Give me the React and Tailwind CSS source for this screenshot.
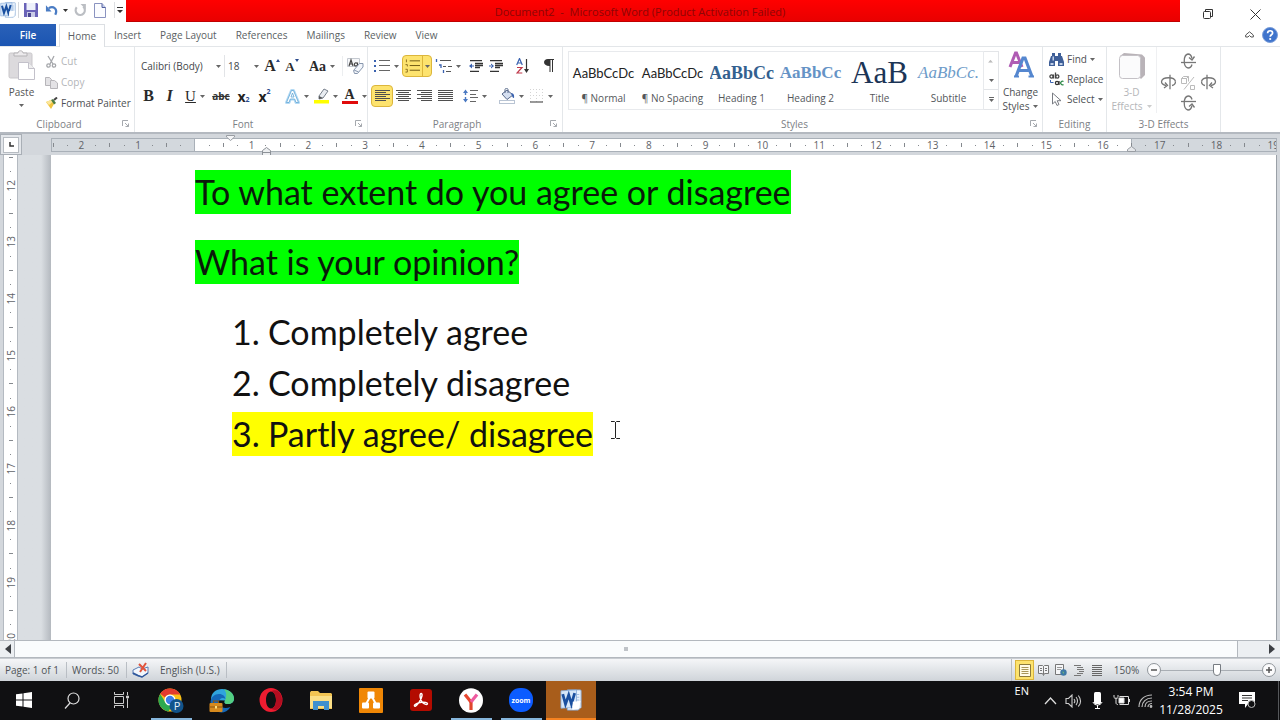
import React from "react";

const cx = (...parts) => parts.filter(Boolean).join(" ");

function Caret({ className = "text-[#666]" }) {
  return (
    <svg width="5" height="3" viewBox="0 0 5 3" className={cx("shrink-0", className)} aria-hidden="true">
      <path d="M0 0h5L2.500 3z" fill="currentColor" />
    </svg>
  );
}

function Tool({ label, className = "w-[21px]", caret, children }) {
  return (
    <button
      type="button"
      aria-label={label}
      className={cx("flex h-[22px] shrink-0 items-center justify-center gap-1", className)}
    >
      {children}
      {caret && <Caret />}
    </button>
  );
}

function Group({ name, launcher, className, children }) {
  return (
    <section className={cx("flex flex-col border-r border-[#e4e7ea]", className)}>
      <div className="flex-1">{children}</div>
      <div className="flex h-4 items-center text-[#7c8085]">
        <span className="flex-1 text-center">{name}</span>
        {launcher && (
          <button type="button" aria-label={name + " options"} className="flex w-4 justify-center">
            <svg width="8" height="8" viewBox="0 0 8 8" fill="none" stroke="#a5a9ae">
              <path d="M.5 6V.5H6M3 3l3.500 3.500M6.500 3.500v3h-3" />
            </svg>
          </button>
        )}
      </div>
    </section>
  );
}

/* ---------- title bar ---------- */

function WordLogo({ size = 16 }) {
  return (
    <svg width={size} height={size} viewBox="0 0 24 24" aria-hidden="true">
      <path d="M8 1h14a1 1 0 0 1 1 1v18l-3 3H8z" fill="#e9f1fb" stroke="#8fb0d8" />
      <path d="M18 6h3M18 9h3M18 12h3" stroke="#9dbbe0" />
      <path d="M1 2l17-1v19L1 21z" fill="#d6e6f8" stroke="#7ea5d6" strokeWidth=".8" />
      <path d="M3 5.500l3 11 3.500-10 3 10 3.500-12" fill="none" stroke="#1a4f9f" strokeWidth="3" />
      <path d="M14 14l8.500-1-2 8.500-7 1z" fill="#fff" />
    </svg>
  );
}

function TitleBar() {
  return (
    <header className="flex h-6 shrink-0 items-start">
      <div className="flex h-5 w-[126px] shrink-0 items-center">
        <span className="flex w-[17px]"><WordLogo /></span>
        <span className="ml-px h-4 w-px bg-[#d5d8dc]" />
        <button type="button" aria-label="Save" className="ml-1">
          <svg width="16" height="16" viewBox="0 0 16 16">
            <path d="M1 1h13l1 1v13H1z" fill="#6a63b8" />
            <path d="M3.500 1h9v7h-9z" fill="#eef1fb" />
            <path d="M4 10h8v5H4z" fill="#c9cbe6" />
            <path d="M5 11h3v4H5z" fill="#4a4691" />
          </svg>
        </button>
        <button type="button" aria-label="Undo" className="ml-1.5 flex items-center gap-1">
          <svg width="14" height="14" viewBox="0 0 15 14">
            <path d="M4 5c5-3 10 1 7 7" fill="none" stroke="#4a7cc4" strokeWidth="2.400" />
            <path d="M1 2v6.500h6z" fill="#4a7cc4" />
          </svg>
          <Caret className="text-[#333]" />
        </button>
        <button type="button" aria-label="Repeat" className="ml-1.5">
          <svg width="13" height="14" viewBox="0 0 12 13">
            <path d="M2.500 4a4.300 4.300 0 1 0 6-.5" fill="none" stroke="#bbbec3" strokeWidth="2" />
            <path d="M6 1h5v5z" fill="#bbbec3" />
          </svg>
        </button>
        <button type="button" aria-label="New document" className="ml-[7px]">
          <svg width="12" height="15" viewBox="0 0 12 15">
            <path d="M.5.5h7.500l3.500 4v10H.5z" fill="#fbfcff" stroke="#8a93c0" />
            <path d="M8 .5v4h3.500" fill="#c8d2ee" stroke="#53609f" />
          </svg>
        </button>
        <span className="ml-2 h-4 w-px bg-[#dddfe2]" />
        <button type="button" aria-label="Customize toolbar" className="ml-[2px]">
          <svg width="6" height="6" viewBox="0 0 6 6">
            <path d="M0 0h6v1H0zM0 3h6L3 6z" fill="#333" />
          </svg>
        </button>
      </div>
      <h1 className="h-[22px] flex-1 border-b border-[#c00000] bg-gradient-to-b from-[#ff0000] to-[#e90000] pr-[26px] text-center text-[11px] leading-6 text-[#8c0606]">
        <span>Document2&nbsp; -&nbsp; Microsoft Word (Product Activation Failed)</span>
      </h1>
      <div className="flex h-6 w-[100px] shrink-0 items-center justify-between pt-1 pr-[19px] pl-[22px]">
        <button type="button" aria-label="Restore">
          <svg width="12" height="12" viewBox="0 0 12 12" fill="none" stroke="#333">
            <rect x="1.500" y="3.500" width="7" height="7" rx="1" />
            <path d="M3.500 3.500v-2h7v7h-2" />
          </svg>
        </button>
        <button type="button" aria-label="Close">
          <svg width="11" height="11" viewBox="0 0 11 11" stroke="#333">
            <path d="M.5.5l10 10M10.500.5l-10 10" />
          </svg>
        </button>
      </div>
    </header>
  );
}

function TabBar() {
  const tabs = ["Insert", "Page Layout", "References", "Mailings", "Review", "View"];
  return (
    <nav className="flex h-[23px] shrink-0 items-stretch border-b border-[#e3e6e9] text-[#5b5f64]">
      <button type="button" className="w-14 shrink-0 bg-gradient-to-b from-[#2a61b8] to-[#1b55b2] font-semibold text-white">
        File
      </button>
      <button type="button" className="-mb-px ml-[3px] w-[46px] shrink-0 border border-b-0 border-[#dcdfe3] bg-white">
        Home
      </button>
      <div className="flex flex-1 gap-[19px] pl-[9px]">
        {tabs.map((t) => (
          <button key={t} type="button">{t}</button>
        ))}
      </div>
      <div className="flex items-center gap-2 pr-0.5">
        <button type="button" aria-label="Minimize ribbon">
          <svg width="9" height="8" viewBox="0 0 9 8" fill="none" stroke="#555">
            <path d="M.7 6V4L4.500.8 8.300 4v2H6L4.500 4.500 3 6z" />
          </svg>
        </button>
        <button type="button" aria-label="Help">
          <svg width="16" height="16" viewBox="0 0 16 16">
            <circle cx="8" cy="8" r="7.500" fill="#3f74cc" stroke="#7d9fd9" />
            <path d="M5.600 6.200c0-3.200 5-3.200 5-.3 0 1.800-2.400 1.900-2.400 3.800" fill="none" stroke="#fff" strokeWidth="1.700" />
            <circle cx="8.200" cy="12" r="1.100" fill="#fff" />
          </svg>
        </button>
      </div>
    </nav>
  );
}

/* ---------- ribbon groups ---------- */

function Clipboard() {
  const row = "flex h-[21px] items-center gap-[3px] whitespace-nowrap";
  return (
    <Group name="Clipboard" launcher className="w-[135px]">
      <div className="flex">
        <button type="button" className="flex w-[43px] flex-col items-center pt-[3px]">
          <svg width="28" height="31" viewBox="0 0 28 31" aria-hidden="true">
            <rect x="1" y="3" width="23" height="25" rx="1.500" fill="#dcdadd" stroke="#c9c7ca" />
            <path d="M6 6V3h4c0-3 5-3 5 0h4v3z" fill="#eceaec" stroke="#b5b3b6" />
            <path d="M10.500 12.500h10l6 6v11h-16z" fill="#fff" stroke="#c3c1ca" />
            <path d="M20.500 12.500v6h6" fill="#eee" stroke="#c3c1ca" />
          </svg>
          <span className="mt-[3px] leading-4 text-[#555]">Paste</span>
          <span className="pt-1"><Caret /></span>
        </button>
        <div className="flex flex-col pt-1 pl-[2px]">
          <button type="button" className={cx(row, "text-[#b3b5b8]")}>
            <svg width="13" height="13" viewBox="0 0 13 13" fill="none" stroke="#a5a7ab" strokeWidth="1.300" aria-hidden="true">
              <path d="M3 1l5 8M9 1L5 9" />
              <circle cx="3.500" cy="10.500" r="1.700" />
              <circle cx="9" cy="10.500" r="1.700" />
            </svg>
            Cut
          </button>
          <button type="button" className={cx(row, "text-[#b3b5b8]")}>
            <svg width="13" height="13" viewBox="0 0 13 13" fill="#e3e2e5" stroke="#b6b5b9" aria-hidden="true">
              <path d="M.5 1.500h4l2 2v6h-6z" />
              <path d="M5.500 4.500h4l3 2.500v5.500h-7z" />
            </svg>
            Copy
          </button>
          <button type="button" className={cx(row, "text-[#4d5054]")}>
            <svg width="13" height="13" viewBox="0 0 13 13" aria-hidden="true">
              <path d="M1 5l5-2 3 4-3 5z" fill="#f0c33c" />
              <path d="M1 5l5-2 1.500 2L4 8z" fill="#fbe69a" />
              <path d="M6 3l2-1 3 4-2 1.500z" fill="#4a7a3f" />
              <path d="M9 3l3-2.500" stroke="#444" strokeWidth="2" />
            </svg>
            Format Painter
          </button>
        </div>
      </div>
    </Group>
  );
}

function DropDown({ label, value, options, className }) {
  return (
    <span className={cx("flex h-[22px] shrink-0 items-center pr-[3px]", className)}>
      <select aria-label={label} defaultValue={value} className="h-[22px] min-w-0 flex-1 appearance-none bg-transparent leading-[22px] text-[#44474b] outline-none">
        {options.map((o) => <option key={o}>{o}</option>)}
      </select>
      <Caret />
    </span>
  );
}

const serif = "font-['Liberation_Serif',serif] text-[#2a2a2a]";

function FontGroup() {
  return (
    <Group name="Font" launcher className="w-[233px]">
      <div className="flex flex-col gap-2 pt-2 pl-[3px]">
        <div className="flex items-center">
          <DropDown label="Font" value="Calibri (Body)" options={["Calibri (Body)", "Cambria"]} className="w-[87px] border-r border-[#e2e4e7] pl-[3px]" />
          <DropDown label="Font size" value="18" options={["16", "18", "20"]} className="w-[37px] pl-[3px]" />
          <Tool label="Grow font" className="w-5">
            <span className={cx("flex items-center leading-5 font-bold text-[16px]", serif)}>
              A
              <svg width="4" height="3" viewBox="0 0 4 3" className="mb-3"><path d="M0 3l2-3 2 3z" fill="#2b4a8c" /></svg>
            </span>
          </Tool>
          <Tool label="Shrink font" className="w-5">
            <span className={cx("flex items-center pt-px leading-5 font-bold text-[13px]", serif)}>
              A
              <svg width="4" height="3" viewBox="0 0 4 3" className="mb-3"><path d="M0 0h4L2 3z" fill="#2b4a8c" /></svg>
            </span>
          </Tool>
          <Tool label="Change case" caret className="ml-1 w-8">
            <span className={cx("text-[14px] font-bold", serif)}>Aa</span>
          </Tool>
          <span className="ml-1 h-5 w-px bg-[#eceef0]" />
          <Tool label="Clear formatting" className="w-6">
            <svg width="17" height="16" viewBox="0 0 17 16" fill="none">
              <path d="M.5.500h12v8H.5z" fill="#f6f7f9" stroke="#c4c9d0" />
              <path d="M2 8l2-6 2 6M2.800 6h2.400M10.500 4.500v3.500M10.500 6.200a1.600 1.600 0 1 0-.2 1" stroke="#444" strokeWidth="1.200" />
              <path d="M6.500 12.500l6-7h3.500v3.500l-5.500 6.500H7.500z" fill="#f3f6fb" stroke="#8796ad" />
              <path d="M7 12l4.500 2" stroke="#8796ad" />
            </svg>
          </Tool>
        </div>
        <div className="flex items-center">
          <Tool label="Bold"><b className={cx("text-[16px]", serif)}>B</b></Tool>
          <Tool label="Italic"><i className={cx("text-[16px] font-bold", serif)}>I</i></Tool>
          <Tool label="Underline" caret className="ml-px w-7"><span className={cx("text-[15px] underline", serif)}>U</span></Tool>
          <Tool label="Strikethrough" className="w-6"><s className="font-bold text-[#333]">abc</s></Tool>
          <Tool label="Subscript">
            <span className="flex items-center text-[14px] font-bold text-[#222]">x<span className="pt-2 text-[7px] text-[#2b4a8c]">2</span></span>
          </Tool>
          <Tool label="Superscript">
            <span className="flex items-center text-[14px] font-bold text-[#222]">x<span className="pb-2 text-[7px] text-[#2b4a8c]">2</span></span>
          </Tool>
          <Tool label="Text effects" caret className="ml-1.5 w-[31px]">
            <svg width="15" height="15" viewBox="0 0 15 15" strokeLinejoin="round">
              <path d="M1.500 13.500l5-12h2l5 12h-2.500l-1.300-3.500H5.300L4 13.500z" fill="#fff" stroke="#b4daf4" strokeWidth="3" />
              <path d="M1.500 13.500l5-12h2l5 12h-2.500l-1.300-3.500H5.300L4 13.500zM6 8h3L7.500 4z" fill="#fff" stroke="#5ea4d6" strokeWidth=".8" />
            </svg>
          </Tool>
          <Tool label="Highlight color" caret className="w-[27px]">
            <svg width="15" height="16" viewBox="0 0 15 16"><path d="M5 8l5-7 4 2-5 7-4 1z" fill="#e9edf2" stroke="#77808c" /><path d="M5 8l4 2-4 1z" fill="#555" /><path d="M0 12h15v3.500H0z" fill="#ffff00" /></svg>
          </Tool>
          <Tool label="Font color" caret className="w-[30px]">
            <span className={cx("flex w-4 justify-center border-b-[3px] border-[#e00b0b] text-[14px] leading-3 font-bold", serif)}>A</span>
          </Tool>
        </div>
      </div>
    </Group>
  );
}

function Lines({ kind }) {
  const x = { left: 0, center: 2, right: 4, full: 0 }[kind];
  const w = kind === "full" ? 15 : 11;
  return (
    <svg width="15" height="12" viewBox="0 0 15 12">
      {[0, 1, 2, 3, 4, 5].map((i) => (
        <rect key={i} x={i % 2 ? x : 0} y={i * 2} width={i % 2 ? w : 15} height="1" fill="#4f4f4f" />
      ))}
    </svg>
  );
}

const lit = "border border-[#dcb63c] bg-[#fde36e]";

function ParagraphGroup() {
  return (
    <Group name="Paragraph" launcher className="w-[195px]">
      <div className="flex flex-col gap-2 pt-2 pl-[3px]">
        <div className="flex items-center">
          <Tool label="Bullets" caret className="w-[31px]">
            <svg width="16" height="14" viewBox="0 0 16 14"><path d="M0 1h2v2H0zM0 6h2v2H0zM0 11h2v2H0z" fill="#3a62b0" /><path d="M5 1.500h11M5 6.500h11M5 11.500h11" stroke="#666" /></svg>
          </Tool>
          <button type="button" aria-label="Numbering" className={cx("flex h-[22px] w-[30px] items-center rounded-sm pl-0.5", lit)}>
            <svg width="15" height="14" viewBox="0 0 16 14"><path d="M1.500 0v3M.5 5.500h2v2M.5 10.500h2v3h-2" fill="none" stroke="#8a6d1c" /><path d="M5 1.500h11M5 6.500h11M5 11.500h11" stroke="#6a5310" /></svg>
            <span className="mx-0.5 h-full w-px bg-[#dcb63c]" />
            <Caret />
          </button>
          <Tool label="Multilevel list" caret className="ml-px w-[29px]">
            <svg width="17" height="15" viewBox="0 0 17 15"><path d="M1.500 0v3M4 6h2v3M8.500 11v3" fill="none" stroke="#3a62b0" strokeWidth="1.300" /><path d="M5 1.500h11M8 7.500h3M13 7.500h4M11 12.500h5" stroke="#555" /></svg>
          </Tool>
          <Tool label="Decrease indent" className="ml-1 w-5">
            <svg width="14" height="12" viewBox="0 0 14 12"><path d="M1 .5h12M6 3.500h8M6 5.500h8M6 7.500h5M1 11.500h9" stroke="#333" strokeWidth="1.300" /><path d="M0 6l3-2.500v5zM2 5.500h3v1H2z" fill="#3a62b0" /></svg>
          </Tool>
          <Tool label="Increase indent" className="w-5">
            <svg width="14" height="12" viewBox="0 0 14 12"><path d="M1 .5h12M6 3.500h8M6 5.500h8M6 7.500h5M1 11.500h9" stroke="#333" strokeWidth="1.300" /><path d="M5 6L2 3.500v5zM0 5.500h3v1H0z" fill="#3a62b0" /></svg>
          </Tool>
          <Tool label="Sort" className="ml-1.5 w-[22px]">
            <svg width="14" height="16" viewBox="0 0 14 16" fill="none"><path d="M.7 7l2.800-6.500L6.300 7M1.700 5h3.600" stroke="#3a62b0" strokeWidth="1.200" /><path d="M1 9.500h5L1 15h5.300" stroke="#c0394b" strokeWidth="1.200" /><path d="M10.500 1v12" stroke="#333" strokeWidth="1.200" /><path d="M8 11h5l-2.500 4z" fill="#333" /></svg>
          </Tool>
          <Tool label="Show formatting marks" className="ml-1 w-[22px]">
            <svg width="10" height="14" viewBox="0 0 10 14"><path d="M4 0h6v1H9v12H8V1H6.500v12h-1V7C-1.500 7-1.500 0 4 0z" fill="#333" /></svg>
          </Tool>
        </div>
        <div className="flex items-center">
          <Tool label="Align left" className={cx("w-[22px] rounded-sm", lit)}><Lines kind="left" /></Tool>
          <Tool label="Center"><Lines kind="center" /></Tool>
          <Tool label="Align right"><Lines kind="right" /></Tool>
          <Tool label="Justify"><Lines kind="full" /></Tool>
          <Tool label="Line spacing" caret className="ml-1 w-[30px]">
            <svg width="15" height="14" viewBox="0 0 15 14"><path d="M0 4l2.500-3.500L5 4H3.200v2H1.800V4zM0 10l2.500 3.500L5 10H3.200V8H1.800v2z" fill="#4a79c2" /><path d="M7 1.500h8M7 5.500h6M7 8.500h8M7 12.500h6" stroke="#666" /></svg>
          </Tool>
          <Tool label="Shading" caret className="ml-1.5 w-[31px]">
            <svg width="16" height="16" viewBox="0 0 16 16"><path d="M3 6l5-4 6 5-6 4.500z" fill="#d5dff0" stroke="#58698a" /><path d="M6 5V1.500c0-1.500 3-1.500 3 0V5" fill="none" stroke="#58698a" /><path d="M12 5c3 0 3.500 3 3 5-1.500 0-2-2-3-5z" fill="#3a62b0" /><rect x=".5" y="12.500" width="15" height="3" fill="#fff" stroke="#b9c4d3" /></svg>
          </Tool>
          <Tool label="Borders" caret className="w-7">
            <svg width="14" height="14" viewBox="0 0 14 14" fill="none"><path d="M.5 0v13M6.500 0v13M12.500 0v13M0 .5h13M0 6.500h13" stroke="#d4d4d4" strokeDasharray="1 2" /><path d="M0 13h13" stroke="#555" strokeWidth="1.200" /></svg>
          </Tool>
        </div>
      </div>
    </Group>
  );
}

function StylesGroup() {
  const styles = [
    ["¶ Normal", "AaBbCcDc", "font-['Lato',sans-serif] text-[13px] text-[#222]"],
    ["¶ No Spacing", "AaBbCcDc", "font-['Lato',sans-serif] text-[13px] text-[#222]"],
    ["Heading 1", "AaBbCc", "font-['Liberation_Serif',serif] text-[18px] font-bold text-[#33608f]"],
    ["Heading 2", "AaBbCc", "font-['Liberation_Serif',serif] text-[17px] font-bold text-[#6593c6]"],
    ["Title", "AaB", "font-['Liberation_Serif',serif] text-[31px] text-[#1c3556]"],
    ["Subtitle", "AaBbCc.", "font-['Liberation_Serif',serif] text-[17px] italic text-[#6d9bc9]"],
  ];
  return (
    <Group name="Styles" launcher className="w-[480px]">
      <div className="flex pt-1 pl-[5px]">
        <div className="grid h-[59px] flex-1 grid-cols-6 border border-[#e8eaed]">
          {styles.map(([name, sample, look]) => (
            <button key={name} type="button" className="flex min-w-0 flex-col items-center pt-1">
              <span className={cx("flex h-[34px] w-[64px] items-center justify-center overflow-hidden whitespace-nowrap leading-8", look)}>{sample}</span>
              <span className="leading-4 whitespace-nowrap text-[#54575b]">{name}</span>
            </button>
          ))}
        </div>
        <div className="flex h-[59px] w-[15px] flex-col border border-l-0 border-[#e3e5e8]">
          <button type="button" aria-label="Previous styles" className="flex flex-1 rotate-180 items-center justify-center"><Caret className="text-[#bbb]" /></button>
          <button type="button" aria-label="Next styles" className="flex flex-1 items-center justify-center"><Caret /></button>
          <button type="button" aria-label="More styles" className="flex flex-1 flex-col items-center justify-center gap-px border-t border-[#e3e5e8]">
            <span className="h-px w-[5px] bg-[#666]" />
            <Caret />
          </button>
        </div>
        <button type="button" className="flex w-[43px] flex-col items-center text-[#4d5054]">
          <svg width="26" height="28" viewBox="0 0 26 28" fill="none" aria-hidden="true">
            <path d="M2 16L7.500 2h1L14 16M4.500 11.500h7" stroke="#b05cb4" strokeWidth="3" />
            <path d="M8 25.500L15 7h2l7 18.500M11 19.500h10" stroke="#5587cf" strokeWidth="3.200" />
            <path d="M6 25.500h5M20.500 25.500H26" stroke="#5587cf" strokeWidth="2" />
          </svg>
          <span className="mt-1.5 leading-[14px]">Change</span>
          <span className="flex items-center gap-1 leading-[14px]">Styles <Caret /></span>
        </button>
      </div>
    </Group>
  );
}

function EditingGroup() {
  const row = "flex h-5 items-center gap-[3px] whitespace-nowrap text-[#4d5054]";
  return (
    <Group name="Editing" className="w-16">
      <div className="flex flex-col pt-0.5 pl-1.5">
        <button type="button" className={row}>
          <svg width="15" height="13" viewBox="0 0 15 13" aria-hidden="true"><path d="M2 3h1V0h3v3h3V0h3v3h1l2 6v4H9V8H6v5H0V9z" fill="#3f5f98" /><path d="M1.500 10h3v2h-3zM10.500 10h3v2h-3zM3.500 3.500h1.500v4H3.500z" fill="#c3d1e8" /></svg>
          Find <Caret />
        </button>
        <button type="button" className={row}>
          <svg width="15" height="14" viewBox="0 0 15 14" fill="none" strokeWidth="1.300" aria-hidden="true">
            <circle cx="2.500" cy="4.500" r="1.600" stroke="#444" />
            <path d="M4.500 2.500v4M6.500.5v6" stroke="#444" />
            <circle cx="8.300" cy="4.500" r="1.600" stroke="#444" />
            <circle cx="8" cy="11" r="1.600" stroke="#333" />
            <path d="M10 9v4" stroke="#333" />
            <path d="M14.500 9.500a1.800 1.800 0 1 0 0 3" stroke="#2f8a4a" />
            <path d="M1.500 8v2.500h3" stroke="#3a62b0" strokeWidth="1" />
          </svg>
          Replace
        </button>
        <button type="button" className={row}>
          <svg width="15" height="14" viewBox="0 0 15 14" aria-hidden="true"><path d="M3.500 1v11l2.700-2.500 1.800 4 2-1-1.800-3.800H12z" fill="#fff" stroke="#7a7d84" /></svg>
          Select <Caret />
        </button>
      </div>
    </Group>
  );
}

function Rotate({ turn }) {
  return (
    <svg width="15" height="16" viewBox="0 0 15 16" fill="none" stroke="#777" strokeWidth="1.300" className={turn} aria-hidden="true">
      <path d="M0 9.500h15" />
      <path d="M7 15c-5-1-5-13 0-14 2 0 3.500 2 4 4.500" />
      <path d="M8 4.500l3 2.500L13.500 3.500" />
      <path d="M7 15c2 0 3.500-1.500 4-3.500" />
    </svg>
  );
}

function EffectsGroup() {
  return (
    <Group name="3-D Effects" className="w-[114px]">
      <div className="flex">
        <button type="button" className="flex w-[49px] flex-col items-center pt-[5px] text-[#b5b6b9]">
          <svg width="28" height="29" viewBox="0 0 28 29" aria-hidden="true">
            <path d="M2 4l4-3 18 1.500 3 3V23l-4 4z" fill="#b9b3b8" />
            <rect x="1.500" y="3.500" width="21" height="23" rx="3" fill="#fbfbfc" stroke="#c4c1c6" />
          </svg>
          <span className="mt-1 leading-[14px]">3-D</span>
          <span className="flex items-center gap-1 leading-[14px]">Effects <Caret className="text-[#ccc]" /></span>
        </button>
        <div className="flex flex-1 flex-col items-center border-l border-[#eff0f2] pt-1.5">
          <button type="button" aria-label="Tilt down"><Rotate turn="" /></button>
          <div className="flex items-center gap-[5px] py-[5px]">
            <button type="button" aria-label="Tilt left"><Rotate turn="-rotate-90 -scale-x-100" /></button>
            <button type="button" aria-label="3-D on or off">
              <svg width="15" height="15" viewBox="0 0 15 15" fill="none" stroke="#bbb"><path d="M.5 3.500h5v5h-5zM2.500 1.500h5v5M5.500 3.500l2-2M.5 3.500l2-2M3 14.500L13 2M9.500 10.500h4v4h-4z" /></svg>
            </button>
            <button type="button" aria-label="Tilt right"><Rotate turn="rotate-90" /></button>
          </div>
          <button type="button" aria-label="Tilt up"><Rotate turn="-scale-y-100" /></button>
        </div>
      </div>
    </Group>
  );
}

/* ---------- rulers and page ---------- */

function unitMarks(numbers) {
  return numbers.flatMap((n, i) => [
    { key: i + "t", kind: "tick" },
    { key: i + "a", kind: "dot" },
    { key: i + "n", kind: "num", text: n },
    { key: i + "b", kind: "dot" },
  ]);
}

const across = unitMarks(["2", "1", ""].concat(Array.from({ length: 19 }, (_, i) => String(i + 1))));
const down = unitMarks(Array.from({ length: 9 }, (_, i) => String(i + 12))).slice(0, -1);

function HorizontalRuler() {
  return (
    <div className="flex h-[21px] shrink-0 items-start">
      <button type="button" aria-label="Tab selector" className="mr-[29px] flex h-[21px] w-[22px] shrink-0 items-center justify-center border border-[#a9afb6] bg-[#e3e6ea]">
        <span className="flex h-4 w-4 items-center justify-center border border-[#b7bcc2] bg-white">
          <svg width="5" height="5" viewBox="0 0 5 5"><path d="M1 0v4h4" fill="none" stroke="#333" strokeWidth="1.500" /></svg>
        </span>
      </button>
      <div className="relative mt-1 mr-[3px] h-[14px] flex-1 border border-[#a9b0b8] bg-[#d3d8dd]">
        <div className="flex h-full">
          <span className="w-[143px] shrink-0 border-r border-[#a9b0b8]" />
          <span className="flex-1 bg-white" />
          <span className="w-[145px] shrink-0 border-l border-[#a9b0b8]" />
        </div>
        <div className="absolute inset-0 overflow-hidden">
          <div className="-mr-[18px] -ml-1.5 flex h-full items-center text-[10px] leading-3 text-[#5f6368]">
            {across.map((m) => (
              <span key={m.key} className="flex w-0 flex-1 items-center justify-center">
                {m.kind === "num" ? m.text : <span className={m.kind === "tick" ? "h-1 w-px bg-[#85898e]" : "h-px w-px bg-[#85898e]"} />}
              </span>
            ))}
          </div>
        </div>
        <svg width="9" height="6" viewBox="0 0 9 6" className="absolute -top-1 left-[174px]"><path d="M.5.5h8v1.500L4.500 5.500.5 2z" fill="#f3f4f6" stroke="#999da3" /></svg>
        <svg width="9" height="9" viewBox="0 0 9 9" className="absolute top-2 left-[210px]"><path d="M.5 8.500v-5l4-3 4 3v5zM.5 5.500h8" fill="#eceef0" stroke="#8c9197" /></svg>
        <svg width="9" height="6" viewBox="0 0 9 6" className="absolute right-[140px] -bottom-px"><path d="M.5 5.500v-2l4-3 4 3v2z" fill="#e6e8eb" stroke="#999da3" /></svg>
      </div>
    </div>
  );
}

function VerticalRuler() {
  return (
    <div className="ml-[3px] w-[15px] shrink-0 overflow-hidden border-x border-[#b4bac1] bg-white">
      <div className="-mt-[5px] -mb-1.5 flex h-[calc(100%+11px)] flex-col text-[10px] leading-3 text-[#5f6368]">
        {down.map((m) => (
          <span key={m.key} className="flex h-0 flex-1 items-center justify-center">
            {m.kind === "num" ? (
              <span className="rotate-180 [writing-mode:vertical-rl]">{m.text}</span>
            ) : (
              <span className={m.kind === "tick" ? "h-px w-1 bg-[#85898e]" : "h-px w-px bg-[#85898e]"} />
            )}
          </span>
        ))}
      </div>
    </div>
  );
}

function Document() {
  return (
    <article className="relative flex-1 overflow-hidden border-r border-[#9aa0a7] bg-white pt-[15px] pl-[144px] font-['Lato','Liberation_Sans',sans-serif] text-[34px] leading-[44px] text-[#0a1a0a]">
      <p className="mb-[26px]"><mark className="inline-block bg-[#00ff00] text-inherit">To what extent do you agree or disagree</mark></p>
      <p className="mb-[26px]"><mark className="inline-block bg-[#00ff00] text-inherit">What is your opinion?</mark></p>
      <ol className="flex flex-col gap-[7px] pl-[37px] text-[#111]">
        <li className="flex"><span className="w-9">1.</span>Completely agree</li>
        <li className="flex"><span className="w-9">2.</span>Completely disagree</li>
        <li className="flex items-center">
          <mark className="flex bg-[#ffff00] text-inherit"><span className="w-9">3.</span>Partly agree/ disagree</mark>
          <svg width="9" height="18" viewBox="0 0 9 18" className="mb-2 ml-[18px]" fill="none" stroke="#222" aria-hidden="true"><path d="M0 .5h3.500l1 1 1-1H9M0 17.500h3.500l1-1 1 1H9M4.500 1v16" /></svg>
        </li>
      </ol>
    </article>
  );
}

function ScrollBar() {
  return (
    <div className="flex h-[18px] shrink-0 items-stretch border-y border-[#b3b8be] bg-[#eceff2]">
      <button type="button" aria-label="Scroll left" className="flex w-[15px] items-center justify-end border-r border-[#b3b8be] pr-[3px]">
        <svg width="6" height="10" viewBox="0 0 6 10"><path d="M6 0v10L0 5z" fill="#3c3f44" /></svg>
      </button>
      <div className="flex flex-1 items-center justify-center border-r border-[#b3b8be] bg-[#fafcfd]">
        <span className="h-1 w-1 bg-[#bfc3c8]" />
      </div>
      <button type="button" aria-label="Scroll right" className="flex w-[42px] items-center justify-end pr-[5px]">
        <svg width="6" height="10" viewBox="0 0 6 10"><path d="M0 0v10l6-5z" fill="#3c3f44" /></svg>
      </button>
    </div>
  );
}

function StatusBar() {
  const sep = "flex h-4 items-center whitespace-nowrap border-r border-[#b9bec4]";
  return (
    <footer className="flex h-[23px] shrink-0 items-center border-t border-[#c8ccd1] bg-gradient-to-b from-[#f5f6f8] to-[#cfd4d9] text-[#4f5357]">
      <button type="button" className={cx(sep, "w-[67px] pl-[5px]")}>Page: 1 of 1</button>
      <button type="button" className={cx(sep, "w-[60px] pl-[5px]")}>Words: 50</button>
      <button type="button" aria-label="Proofing errors" className="ml-[5px]">
        <svg width="18" height="17" viewBox="0 0 18 17"><path d="M1 8l6-3 3 2 6-2v6l-6 4-4-1-5-2z" fill="#f3f7fc" stroke="#5a7db4" /><path d="M1 11l5 2.500 4 1.500 6-4" fill="none" stroke="#31589c" strokeWidth="1.500" /><path d="M7 2l7 7M14 1L8 10" stroke="#e0533c" strokeWidth="2" /></svg>
      </button>
      <button type="button" className={cx(sep, "ml-2.5 pr-1.5")}>English (U.S.)</button>
      <span className="flex-1" />
      <div className="flex h-full items-center border-l border-[#b9bec4] pl-[3px]">
        <button type="button" aria-label="Print layout" className={cx("flex h-5 w-[19px] items-center justify-center", lit)}>
          <svg width="12" height="13" viewBox="0 0 12 13"><path d="M.5.5h11v12H.5z" fill="#fffbe6" stroke="#8d7b3c" /><path d="M2.500 3.500h7M2.500 5.500h7M2.500 7.500h7M2.500 9.500h7" stroke="#a8965a" /></svg>
        </button>
        <button type="button" aria-label="Full screen reading" className="flex w-[18px] justify-center">
          <svg width="11" height="12" viewBox="0 0 11 12" fill="#f3f4f6" stroke="#777"><path d="M.5 1.500h4l1 1 1-1h4v8h-4l-1 2-1-2h-4zM5.500 2.500v8M2 4.500h2M2 6.500h2M7 4.500h2M7 6.500h2" /></svg>
        </button>
        <button type="button" aria-label="Web layout" className="flex w-[18px] justify-center">
          <svg width="12" height="12" viewBox="0 0 12 12"><path d="M.5.5h8v10h-8z" fill="#f5f6f8" stroke="#777" /><path d="M2 3.500h5M2 5.500h4" stroke="#999" /><circle cx="8.500" cy="8.500" r="3.200" fill="#3d78a5" /><path d="M7 7.500l2 .5v2z" fill="#6fb877" /></svg>
        </button>
        <button type="button" aria-label="Outline" className="flex w-[18px] justify-center">
          <svg width="10" height="11" viewBox="0 0 10 11" stroke="#777"><path d="M0 .5h7M3 2.500h6M3 4.500h7M5 6.500h5M3 8.500h6M0 10.500h7" /></svg>
        </button>
        <button type="button" aria-label="Draft" className="flex w-[18px] justify-center">
          <svg width="10" height="11" viewBox="0 0 10 11" stroke="#666"><path d="M0 .5h10M0 2.500h10M0 4.500h10M0 6.500h10M0 8.500h10M0 10.500h10" /></svg>
        </button>
        <button type="button" className="w-[41px] text-center">150%</button>
        <button type="button" aria-label="Zoom out">
          <svg width="14" height="14" viewBox="0 0 14 14"><circle cx="7" cy="7" r="6.500" fill="#fbfbfc" stroke="#8f949a" /><path d="M4 7h6" stroke="#555" strokeWidth="1.500" /></svg>
        </button>
        <input
          type="range"
          aria-label="Zoom"
          min="0"
          max="100"
          defaultValue="56"
          className="h-[14px] w-[101px] appearance-none bg-[linear-gradient(#a9aeb4,#a9aeb4)] bg-[length:100%_1px] bg-center bg-no-repeat [&::-webkit-slider-thumb]:h-3 [&::-webkit-slider-thumb]:w-2 [&::-webkit-slider-thumb]:appearance-none [&::-webkit-slider-thumb]:rounded-b-[4px] [&::-webkit-slider-thumb]:border [&::-webkit-slider-thumb]:border-[#777c82] [&::-webkit-slider-thumb]:bg-white"
        />
        <button type="button" aria-label="Zoom in" className="pr-1">
          <svg width="14" height="14" viewBox="0 0 14 14"><circle cx="7" cy="7" r="6.500" fill="#fbfbfc" stroke="#8f949a" /><path d="M4 7h6M7 4v6" stroke="#555" strokeWidth="1.500" /></svg>
        </button>
      </div>
    </footer>
  );
}

/* ---------- task bar ---------- */

function TaskButton({ label, open, className = "w-[50px]", children }) {
  return (
    <button type="button" aria-label={label} className={cx("flex h-full shrink-0 flex-col items-center", className)}>
      <span className="flex flex-1 items-center pt-px">{children}</span>
      <span className={cx("h-0.5", open === "active" ? "w-full bg-[#f58220]" : "w-[41px]", open === true && "bg-[#86b6dc]")} />
    </button>
  );
}

function TaskBar() {
  return (
    <div className="flex h-[39px] shrink-0 items-center bg-[#101012] text-white">
      <TaskButton label="Start" className="w-12">
        <svg width="16" height="16" viewBox="0 0 16 16" fill="#fff"><path d="M0 2.300l6.500-.9v6.100H0zM7.500 1.200L16 0v7.500H7.500zM0 8.500h6.500v6.100L0 13.700zM7.500 8.500H16V16l-8.500-1.200z" /></svg>
      </TaskButton>
      <TaskButton label="Search" className="w-12">
        <svg width="16" height="17" viewBox="0 0 16 17" fill="none" stroke="#ddd" strokeWidth="1.200"><circle cx="9.500" cy="6.500" r="5.500" /><path d="M6 11l-5 5.500" /></svg>
      </TaskButton>
      <TaskButton label="Task view" className="w-[50px]">
        <svg width="17" height="16" viewBox="0 0 17 16" fill="none" stroke="#ccc"><path d="M1.500 0v2.500h9V0M1.500 16v-2.500h9V16M1.500 4.500h9v7h-9zM14.500 0v3M14.500 6.500V16" /><path d="M13.500 4h2v2h-2z" fill="#ccc" /></svg>
      </TaskButton>
      <TaskButton label="Chrome" open>
        <svg width="26" height="27" viewBox="0 0 26 27">
          <circle cx="12" cy="13" r="11.500" fill="#fbc116" />
          <path d="M12 1.500a11.500 11.500 0 0 1 10.200 6H12a5.500 5.500 0 0 0-5 3L2.300 6.800A11.500 11.500 0 0 1 12 1.500z" fill="#e33b2e" />
          <path d="M2.200 6.900a11.500 11.500 0 0 0 8.300 17.500l3.500-6-6.500-3z" fill="#2da94f" />
          <circle cx="12" cy="13" r="5.500" fill="#fff" /><circle cx="12" cy="13" r="4.200" fill="#3d7fe6" />
          <circle cx="18.500" cy="19" r="7" fill="#11548c" />
          <text x="15.800" y="23" fontSize="11" fill="#e5f0fa">P</text>
        </svg>
      </TaskButton>
      <TaskButton label="Edge">
        <svg width="25" height="25" viewBox="0 0 25 25">
          <path d="M2 12C2 4.500 7 1 13 1c7 0 12 4.500 12 9.500 0 4-3 5.500-6 5.500-3.500 0-4-1.500-3-3.500z" fill="#2fa4dd" />
          <path d="M15 1.300c6 .8 10 4.700 10 9.200 0 4-3 5.500-6 5.500-3.500 0-4-1.500-3-3.500 1.500-4 2-8-1-11.200z" fill="#54cf82" />
          <path d="M1.500 14c.5-5 4-8 8.500-8 4 0 6 2.500 6.500 5-4-3-8 1-6 5.500 1.500 3.500 6 4.500 11 2.500-4 6.500-11 6.500-15 3.500-3-2-5-5-5-8.500z" fill="#1467b8" />
          <rect x=".5" y="15" width="13" height="9" rx="1" fill="#d68a1e" /><path d="M4.500 15v-2h5v2M.5 19h13" fill="none" stroke="#8a5410" strokeWidth="1.200" /><path d="M6 18h2v2.500H6z" fill="#ffdf7a" />
        </svg>
      </TaskButton>
      <TaskButton label="Opera">
        <svg width="24" height="24" viewBox="0 0 24 24"><path fillRule="evenodd" d="M12 0a11.500 12 0 0 0 0 24 11.500 12 0 0 0 0-24zm0 3.500c3 0 5 4 5 8.500s-2 8.500-5 8.500S7 16.500 7 12s2-8.500 5-8.500z" fill="#ee1c30" /><path d="M12 3.500c2-1.500 5-1.500 7-.5a12 12 0 0 1 0 18c-2 1.500-5 1-7-.5 3 0 5-4 5-8.500s-2-8.500-5-8.500z" fill="#b30d20" /></svg>
      </TaskButton>
      <TaskButton label="File Explorer">
        <svg width="22" height="19" viewBox="0 0 22 19"><path d="M0 1.500L1 0h7l2 2h11l1 1v15H0z" fill="#f2c453" /><path d="M0 5h22v12H0z" fill="#fbdf87" /><path d="M3 10h16v9h-5v-4H8v4H3z" fill="#3f90cf" /></svg>
      </TaskButton>
      <TaskButton label="Diagrams">
        <svg width="24" height="25" viewBox="0 0 24 25"><rect width="24" height="25" rx="1" fill="#f08705" /><path d="M12 7l-6 11M12 7l6 11" stroke="#fff" strokeWidth="2" /><rect x="8.500" y="3.500" width="7" height="7" rx="1" fill="#fff" /><rect x="3" y="14.500" width="7" height="6" rx="1" fill="#fff" /><rect x="14" y="14.500" width="7" height="6" rx="1" fill="#fff" /></svg>
      </TaskButton>
      <TaskButton label="Acrobat">
        <svg width="22" height="22" viewBox="0 0 22 22"><rect width="22" height="22" rx="3" fill="#b30b00" /><path d="M11 4.500c2 0 1 4-1.500 8-2 3.500-4.500 5.500-5 4.500-.7-1.300 3-3.300 7-3.800 3-.4 6 .3 6 1.600s-3 .8-5-1.300c-2.500-2.500-3.200-9-1.500-9z" fill="none" stroke="#fff" strokeWidth="1.400" /></svg>
      </TaskButton>
      <TaskButton label="Yandex Browser" open>
        <svg width="24" height="25" viewBox="0 0 24 25"><ellipse cx="12" cy="12.500" rx="12" ry="12.200" fill="#fff" /><path d="M6 6.500l6 7.500" stroke="#e8472f" strokeWidth="3.200" /><path d="M12 13v9" stroke="#e0452c" strokeWidth="3.200" /><path d="M18 6.500L12 14" stroke="#ee5aa0" strokeWidth="3.200" /></svg>
      </TaskButton>
      <TaskButton label="Zoom" open>
        <svg width="24" height="24" viewBox="0 0 24 24"><rect width="24" height="24" rx="11" fill="#0b5cff" /><text x="12" y="14.500" textAnchor="middle" fontSize="7" fontWeight="bold" fill="#fff">zoom</text></svg>
      </TaskButton>
      <TaskButton label="Word" open="active" className="w-[50px] bg-[#a85d1b]"><WordLogo size={22} /></TaskButton>
      <span className="flex-1" />
      <span className="mb-5 text-[11px] leading-4">EN</span>
      <div className="flex items-center gap-2 pl-[15px]">
        <svg width="13" height="8" viewBox="0 0 13 8" fill="none" stroke="#ddd" strokeWidth="1.300"><path d="M1 7l5.500-6L12 7" /></svg>
        <svg width="17" height="14" viewBox="0 0 17 14" fill="none" stroke="#ccc" strokeWidth="1.100"><path d="M1 4.500h2.500L7 1v12L3.500 9.500H1zM9 5c1 1.300 1 3 0 4M11 3c2 2.300 2 6 0 8M13.300 1.500c3 3.500 3 8 0 11" /></svg>
        <svg width="15" height="17" viewBox="0 0 15 17" fill="#fff"><rect x="4" y="0" width="7" height="12" rx="1.500" /><path d="M3 10c1 4 8 4 9 0M7.500 13v3.500M5 16.500h5" fill="none" stroke="#fff" /></svg>
        <svg width="17" height="13" viewBox="0 0 17 13" fill="none" stroke="#ddd"><path d="M1 1v2.500c0 1 4 1 4 0V1M3 4v5c0 1 1 1.500 2 1.500M6.500 2.500h9v8h-9" /><path d="M6 4h5v5H6z" fill="#fff" /><path d="M16.500 5v3" /></svg>
        <svg width="15" height="14" viewBox="0 0 15 14" fill="none" stroke="#bbb" strokeWidth="1.200"><path d="M1 13C1 6 6 1 14 1M4 13c0-5 4-9 10-9M7 13c0-4 3-6 7-6M10 13c0-2 2-3.500 4-3.500" /><circle cx="13" cy="12.500" r=".8" fill="#fff" /></svg>
      </div>
      <time className="w-[76px] text-center text-[12px] leading-[18px]">
        3:54 PM<br />11/28/2025
      </time>
      <button type="button" aria-label="Notifications" className="mr-[22px] ml-2.5">
        <svg width="17" height="17" viewBox="0 0 17 17"><path d="M0 0h16v12H9l-3 4v-4H0z" fill="#fff" /><path d="M3 3.500h10M3 6h10M3 8.500h6" stroke="#333" /><circle cx="12.500" cy="12" r="3.500" fill="#101012" stroke="#bbb" /></svg>
      </button>
      <span className="mr-px h-full w-px bg-[#55575a]" />
    </div>
  );
}

export default function App() {
  return (
    <div className="flex h-screen flex-col overflow-hidden bg-white font-['Open_Sans','Noto_Sans',sans-serif] text-[10px]">
      <TitleBar />
      <TabBar />
      <div className="flex h-[85px] shrink-0 items-stretch bg-white">
        <Clipboard />
        <FontGroup />
        <ParagraphGroup />
        <StylesGroup />
        <EditingGroup />
        <EffectsGroup />
      </div>
      <main className="flex min-h-0 flex-1 flex-col border-t-2 border-[#b4b9c0] bg-[#d3d7dc]">
        <HorizontalRuler />
        <div className="flex min-h-0 flex-1">
          <VerticalRuler />
          <div className="w-[33px] shrink-0 bg-gradient-to-r from-[#dadee2] from-70% to-[#b4b9bf]" />
          <Document />
          <div className="w-[3px] shrink-0" />
        </div>
        <ScrollBar />
      </main>
      <StatusBar />
      <TaskBar />
    </div>
  );
}
